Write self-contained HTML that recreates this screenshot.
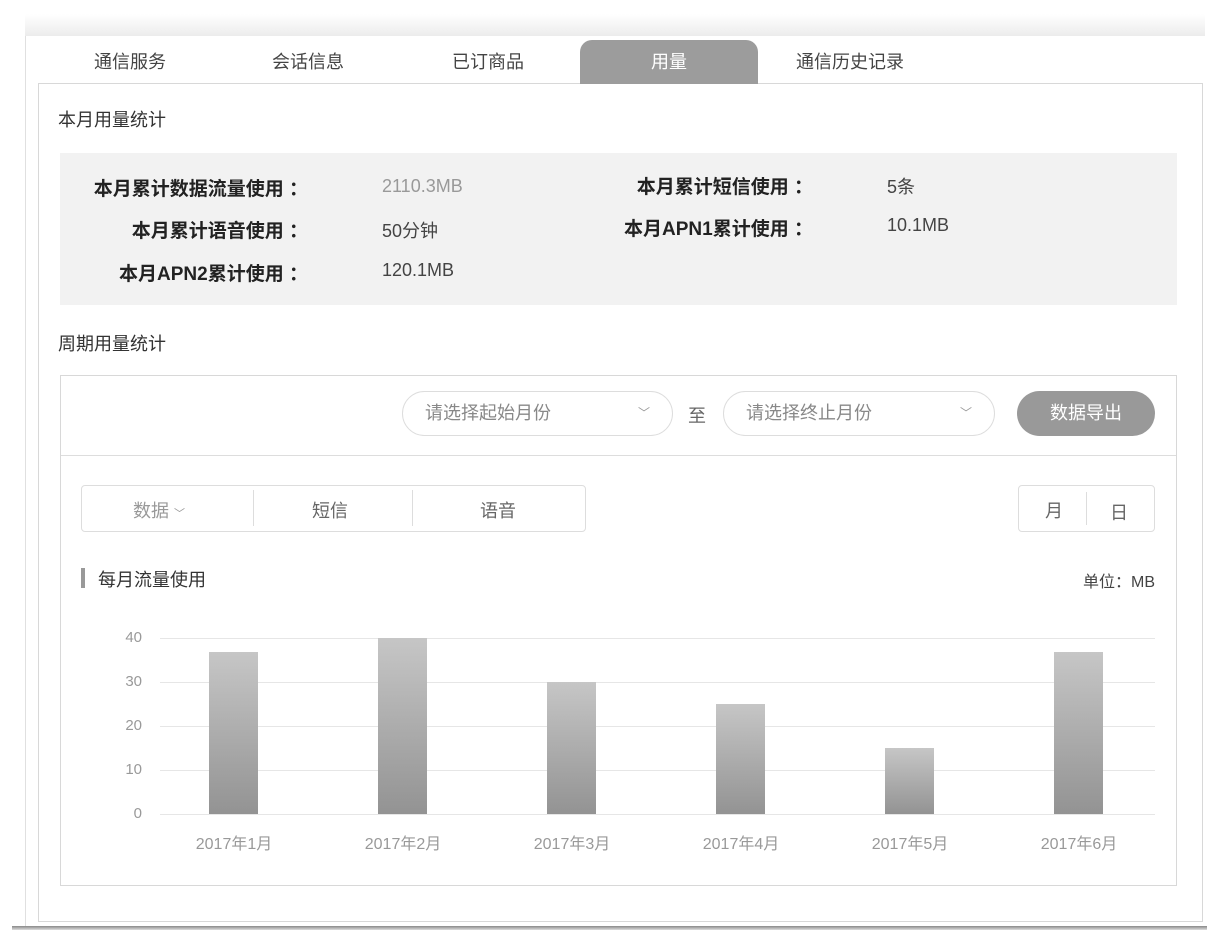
<!DOCTYPE html>
<html><head><meta charset="utf-8"><style>
*{margin:0;padding:0;box-sizing:border-box}
body{width:1220px;height:942px;background:#fff;position:relative;overflow:hidden;font-family:"Liberation Sans","Noto Sans CJK SC",sans-serif;color:#333}
.a{position:absolute;white-space:nowrap}
.tab{position:absolute;top:40px;height:44px;line-height:44px;font-size:18px;color:#444;text-align:center}
.lbl{position:absolute;font-size:19px;color:#222;text-align:right;width:270px;font-weight:bold}
.val{position:absolute;font-size:18px;color:#444}
.sel{position:absolute;top:391px;height:45px;border:1px solid #ddd;border-radius:23px;font-size:18px;color:#888;line-height:43px;padding-left:22px}
.sel span{position:absolute;right:22px;font-size:12px;color:#999}
.yl{position:absolute;width:40px;text-align:right;font-size:15px;color:#999;left:102px}
.gl{position:absolute;left:160px;width:995px;height:1px;background:#e6e6e6}
.bar{position:absolute;width:49px;background:linear-gradient(#c6c6c6,#939393)}
.xl{position:absolute;top:830px;font-size:16px;color:#999;width:120px;text-align:center}
</style></head><body>
<div class="a" style="left:25px;top:14px;width:1180px;height:22px;background:linear-gradient(#fff,#ececec)"></div>
<div class="a" style="left:25px;top:36px;width:1px;height:892px;background:#e0e0e0"></div>
<div class="a" style="left:38px;top:83px;width:1165px;height:839px;border:1px solid #d8d8d8"></div>
<div class="a" style="left:12px;top:926px;width:1195px;height:4px;background:linear-gradient(#888,#ddd)"></div>
<div class="tab" style="left:60px;width:140px">通信服务</div>
<div class="tab" style="left:238px;width:140px">会话信息</div>
<div class="tab" style="left:418px;width:140px">已订商品</div>
<div class="tab" style="left:580px;width:178px;background:#9c9c9c;color:#fff;border-radius:12px 12px 0 0">用量</div>
<div class="tab" style="left:780px;width:140px">通信历史记录</div>
<div class="a" style="left:58px;top:106px;font-size:18px;color:#333">本月用量统计</div>
<div class="a" style="left:60px;top:153px;width:1117px;height:152px;background:#f2f2f2"></div>
<div class="lbl" style="left:38px;top:174px">本月累计数据流量使用 ：</div>
<div class="lbl" style="left:38px;top:216px">本月累计语音使用 ：</div>
<div class="lbl" style="left:38px;top:259px">本月APN2累计使用 ：</div>
<div class="val" style="left:382px;top:176px;color:#999">2110.3MB</div>
<div class="val" style="left:382px;top:217px">50分钟</div>
<div class="val" style="left:382px;top:260px">120.1MB</div>
<div class="lbl" style="left:543px;top:172px">本月累计短信使用 ：</div>
<div class="lbl" style="left:543px;top:214px">本月APN1累计使用 ：</div>
<div class="val" style="left:887px;top:173px">5条</div>
<div class="val" style="left:887px;top:215px">10.1MB</div>
<div class="a" style="left:58px;top:330px;font-size:18px;color:#333">周期用量统计</div>
<div class="a" style="left:60px;top:375px;width:1117px;height:511px;border:1px solid #d8d8d8"></div>
<div class="a" style="left:61px;top:455px;width:1115px;height:1px;background:#ddd"></div>
<div class="sel" style="left:402px;width:271px">请选择起始月份<span>﹀</span></div>
<div class="a" style="left:688px;top:402px;font-size:18px;color:#666">至</div>
<div class="sel" style="left:723px;width:272px">请选择终止月份<span>﹀</span></div>
<div class="a" style="left:1017px;top:391px;width:138px;height:45px;border-radius:23px;background:#999;color:#fff;font-size:18px;line-height:45px;text-align:center">数据导出</div>
<div class="a" style="left:81px;top:485px;width:505px;height:47px;border:1px solid #ddd;border-radius:4px"></div>
<div class="a" style="left:253px;top:490px;width:1px;height:36px;background:#ddd"></div>
<div class="a" style="left:412px;top:490px;width:1px;height:36px;background:#ddd"></div>
<div class="a" style="left:133px;top:497px;font-size:18px;color:#999">数据 <span style="font-size:11px">﹀</span></div>
<div class="a" style="left:312px;top:497px;font-size:18px;color:#666">短信</div>
<div class="a" style="left:480px;top:497px;font-size:18px;color:#666">语音</div>
<div class="a" style="left:1018px;top:485px;width:137px;height:47px;border:1px solid #ddd;border-radius:4px"></div>
<div class="a" style="left:1086px;top:492px;width:1px;height:33px;background:#ddd"></div>
<div class="a" style="left:1045px;top:497px;font-size:18px;color:#666">月</div>
<div class="a" style="left:1110px;top:499px;font-size:18px;color:#666">日</div>
<div class="a" style="left:81px;top:568px;width:4px;height:20px;background:#999"></div>
<div class="a" style="left:98px;top:566px;font-size:18px;color:#333">每月流量使用</div>
<div class="a" style="left:1055px;width:100px;text-align:right;top:568px;font-size:16px;color:#444">单位：MB</div>
<div class="gl" style="top:638px"></div><div class="gl" style="top:682px"></div><div class="gl" style="top:726px"></div><div class="gl" style="top:770px"></div><div class="gl" style="top:814px"></div>
<div class="yl" style="top:629px">40</div><div class="yl" style="top:673px">30</div><div class="yl" style="top:717px">20</div><div class="yl" style="top:761px">10</div><div class="yl" style="top:805px">0</div>
<div class="bar" style="left:209px;top:652px;height:162px"></div>
<div class="bar" style="left:378px;top:638px;height:176px"></div>
<div class="bar" style="left:547px;top:682px;height:132px"></div>
<div class="bar" style="left:716px;top:704px;height:110px"></div>
<div class="bar" style="left:885px;top:748px;height:66px"></div>
<div class="bar" style="left:1054px;top:652px;height:162px"></div>
<div class="xl" style="left:174px">2017年1月</div><div class="xl" style="left:343px">2017年2月</div><div class="xl" style="left:512px">2017年3月</div><div class="xl" style="left:681px">2017年4月</div><div class="xl" style="left:850px">2017年5月</div><div class="xl" style="left:1019px">2017年6月</div>
</body></html>
